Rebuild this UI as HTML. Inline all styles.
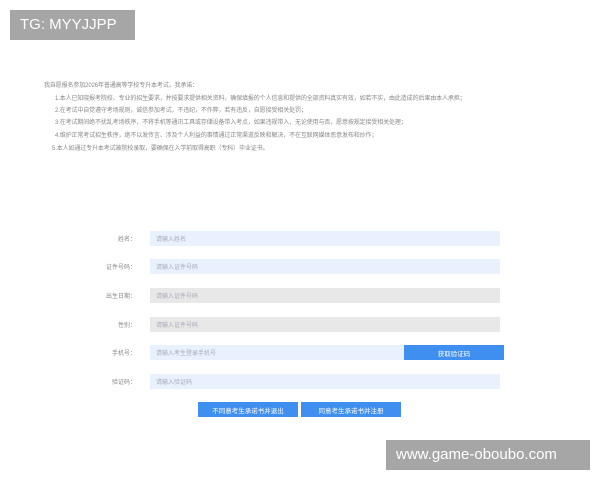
<!DOCTYPE html><html><head><meta charset="utf-8"><style>
*{margin:0;padding:0;box-sizing:border-box}
body{width:600px;height:480px;background:#fff;position:relative;overflow:hidden;font-family:"Liberation Sans","Noto Sans CJK SC",sans-serif;color:#666}
.t{position:absolute;font-size:6px;white-space:nowrap;color:#888;letter-spacing:-0.12px}
.l{position:absolute;font-size:6px;color:#888;text-align:right;width:40px;left:96px;height:15px;display:flex;align-items:center;justify-content:flex-end}
.i{position:absolute;left:150px;width:350px;height:15px;background:#e8f1fd;font-size:6px;color:#aab;padding-left:6px;display:flex;align-items:center}
.g{background:#e8e8e8}
.b{position:absolute;height:15px;background:#3f8ff0;color:#fff;font-size:6.5px;display:flex;align-items:center;justify-content:center}
.w{position:absolute;background:#a6a6a6;color:#fff;font-size:15px;line-height:30px;padding-left:10px}
</style></head><body>
<div class="w" style="left:10px;top:10px;width:125px;height:30px">TG: MYYJJPP</div>
<div class="w" style="left:386px;top:440px;width:204px;height:30px">www.game-oboubo.com</div>
<div class="t" style="left:44px;top:80px">我自愿报名参加2026年普通高等学校专升本考试，我承诺：</div>
<div class="t" style="left:55px;top:93px">1.本人已知晓报考院校、专业的招生要求，并按要求提供相关资料，确保填报的个人信息和提供的全部资料真实有效，如若不实，由此造成的后果由本人承担；</div>
<div class="t" style="left:55px;top:105px">2.在考试中自觉遵守考场规则，诚信参加考试，不违纪，不作弊，若有违反，自愿接受相关处罚；</div>
<div class="t" style="left:55px;top:117px">3.在考试期间绝不扰乱考场秩序，不将手机等通讯工具或存储设备带入考点，如果违规带入，无论使用与否，愿意按规定接受相关处理；</div>
<div class="t" style="left:55px;top:130px">4.维护正常考试招生秩序，绝不以发传言、涉及个人利益的事情通过正常渠道反映和解决，不在互联网媒体恶意发布和炒作；</div>
<div class="t" style="left:52px;top:143px">5.本人如通过专升本考试被院校录取，要确保在入学前取得高职（专科）毕业证书。</div>
<div class="l" style="top:231px">姓名：</div><div class="i" style="top:231px">请输入姓名</div>
<div class="l" style="top:259px">证件号码：</div><div class="i" style="top:259px">请输入证件号码</div>
<div class="l" style="top:288px">出生日期：</div><div class="i g" style="top:288px">请输入证件号码</div>
<div class="l" style="top:317px">性别：</div><div class="i g" style="top:317px">请输入证件号码</div>
<div class="l" style="top:345px">手机号：</div><div class="i" style="top:345px;width:254px">请输入考生登录手机号</div>
<div class="b" style="left:404px;top:345px;width:100px">获取验证码</div>
<div class="l" style="top:374px">验证码：</div><div class="i" style="top:374px">请输入验证码</div>
<div class="b" style="left:198px;top:402px;width:100px">不同意考生承诺书并退出</div>
<div class="b" style="left:301px;top:402px;width:100px">同意考生承诺书并注册</div>
</body></html>
